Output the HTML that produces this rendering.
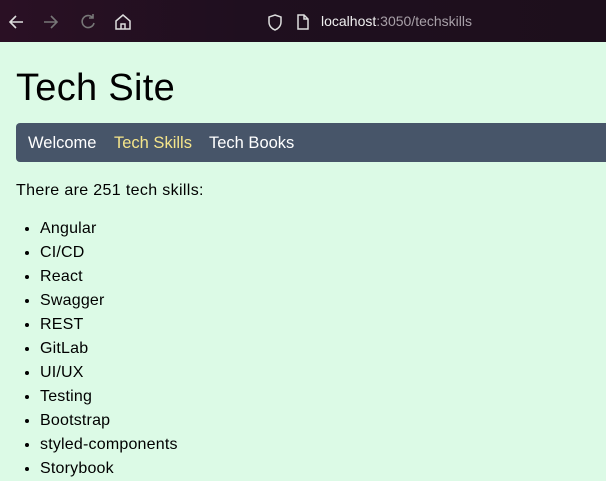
<!DOCTYPE html>
<html><head><style>
body{margin:0;width:606px;height:465px;overflow:hidden;background:#dcfae6;font-family:"Liberation Sans",sans-serif;color:#000}
.bar{height:42px;background:linear-gradient(90deg,#2a1024,#1f0f1f 40%,#1d0f1c);position:relative}
.bar svg{position:absolute}
.url{position:absolute;left:321px;top:13px;font-size:14px;color:#f0f0f0}
.url span{color:#a8a0a8}
h1{position:absolute;left:16px;top:66px;margin:0;font-weight:400;font-size:38px;line-height:44px;letter-spacing:0.3px}
nav{position:absolute;left:16px;top:123px;width:600px;height:39px;background:#475569;border-radius:4px;font-size:16.5px;line-height:41px;color:#fff}
nav span{position:absolute}
p{position:absolute;left:16px;top:181px;margin:0;font-size:16px;line-height:20px;letter-spacing:0.35px}
ul{position:absolute;left:0;top:217px;margin:0;padding-left:40px;font-size:16px;line-height:24px;letter-spacing:0.2px}
</style></head><body>
<div class="bar">
<svg width="20" height="20" style="left:7px;top:12px" viewBox="0 0 20 20"><path d="M16 10H3M9 4L3 10l6 6" stroke="#ddd" stroke-width="1.6" fill="none"/></svg>
<svg width="20" height="20" style="left:41px;top:12px" viewBox="0 0 20 20"><path d="M3 10h13M10 4l6 6-6 6" stroke="#777" stroke-width="1.6" fill="none"/></svg>
<svg width="20" height="20" style="left:78px;top:12px" viewBox="0 0 20 20"><path d="M15 6A6 6 0 1 0 16 11M15 2v4h-4" stroke="#777" stroke-width="1.6" fill="none"/></svg>
<svg width="20" height="20" style="left:113px;top:12px" viewBox="0 0 20 20"><path d="M3 9l7-6 7 6v8H3zM8 17v-5h4v5" stroke="#ddd" stroke-width="1.5" fill="none"/></svg>
<svg width="20" height="20" style="left:265px;top:13px" viewBox="0 0 20 20"><path d="M10 2l6 2v5c0 4-3 7-6 8-3-1-6-4-6-8V4z" stroke="#ddd" stroke-width="1.5" fill="none"/></svg>
<svg width="20" height="20" style="left:293px;top:12px" viewBox="0 0 20 20"><path d="M5 3h6l4 4v10H5zM11 3v4h4" stroke="#ddd" stroke-width="1.5" fill="none"/></svg>
<div class="url">localhost<span>:3050/techskills</span></div>
</div>
<h1>Tech Site</h1>
<nav><span style="left:12px">Welcome</span><span style="left:98px;color:#f5e58a">Tech Skills</span><span style="left:193px">Tech Books</span></nav>
<p>There are 251 tech skills:</p>
<ul><li>Angular</li><li>CI/CD</li><li>React</li><li>Swagger</li><li>REST</li><li>GitLab</li><li>UI/UX</li><li>Testing</li><li>Bootstrap</li><li>styled-components</li><li>Storybook</li></ul>
</body></html>
